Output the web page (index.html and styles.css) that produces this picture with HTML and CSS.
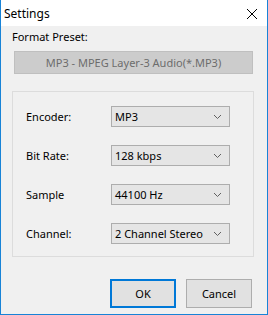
FILE: index.html
```html
<!DOCTYPE html>
<html>
<head>
<meta charset="utf-8">
<link rel="stylesheet" href="styles.css">
</head>
<body>
<div class="window">
  <div class="titlebar">
    <span class="title">Settings</span>
    <span class="close">
      <svg width="12" height="12" viewBox="0 0 12 12"><path d="M1 1L11 11M11 1L1 11" stroke="#000" stroke-width="1" fill="none"/></svg>
    </span>
  </div>
  <div class="content">
    <div class="preset-label">Format Preset:</div>
    <div class="preset">MP3 - MPEG Layer-3 Audio(*.MP3)</div>
    <div class="group">
      <div class="row"><span class="label">Encoder:</span><div class="combo"><span>MP3</span><svg class="chev" width="9" height="6" viewBox="0 0 9 6"><path d="M1 1L4.5 4.5L8 1" stroke="#606060" stroke-width="1" fill="none"/></svg></div></div>
      <div class="row"><span class="label">Bit Rate:</span><div class="combo"><span>128 kbps</span><svg class="chev" width="9" height="6" viewBox="0 0 9 6"><path d="M1 1L4.5 4.5L8 1" stroke="#606060" stroke-width="1" fill="none"/></svg></div></div>
      <div class="row"><span class="label">Sample</span><div class="combo"><span>44100 Hz</span><svg class="chev" width="9" height="6" viewBox="0 0 9 6"><path d="M1 1L4.5 4.5L8 1" stroke="#606060" stroke-width="1" fill="none"/></svg></div></div>
      <div class="row"><span class="label">Channel:</span><div class="combo"><span>2 Channel Stereo</span><svg class="chev" width="9" height="6" viewBox="0 0 9 6"><path d="M1 1L4.5 4.5L8 1" stroke="#606060" stroke-width="1" fill="none"/></svg></div></div>
    </div>
    <div class="buttons">
      <div class="btn btn-default">OK</div>
      <div class="btn">Cancel</div>
    </div>
  </div>
</div>
</body>
</html>
```
FILE: styles.css
```css
html, body {
  margin: 0;
  padding: 0;
  background: #f0f0f0;
}
body {
  font-family: "Noto Sans", "Open Sans", sans-serif;
  font-size: 11px;
  color: #000;
}
.window {
  width: 268px;
  height: 315px;
  box-sizing: border-box;
  border: 1px solid #1883d7;
  border-top: none;
  background: #f0f0f0;
  display: flex;
  flex-direction: column;
}
.titlebar {
  height: 26px;
  background: #fff;
  display: flex;
  align-items: center;
  justify-content: space-between;
  padding-left: 3px;
  padding-right: 9px;
  flex: none;
}
.title {
  font-size: 12px;
  line-height: 15px;
  margin-top: 1px;
}
.close {
  display: flex;
  margin-top: 1px;
}
.content {
  padding: 0 13px 0 11px;
  display: flex;
  flex-direction: column;
}
.preset-label {
  margin-top: 3px;
  line-height: 15px;
  height: 15px;
}
.preset {
  margin: 7px 1px 0 2px;
  height: 23px;
  box-sizing: border-box;
  border: 1px solid #bfbfbf;
  background: #cccccc;
  color: #6d6d6d;
  display: flex;
  align-items: center;
  justify-content: center;
  line-height: 15px;
}
.group {
  margin-top: 17px;
  height: 166px;
  box-sizing: border-box;
  border: 1px solid #dcdcdc;
  padding: 14px 0 0 13px;
  display: flex;
  flex-direction: column;
  gap: 18px;
}
.row {
  display: flex;
  align-items: center;
  height: 21px;
}
.label {
  width: 85px;
  line-height: 15px;
}
.combo {
  width: 119px;
  height: 21px;
  box-sizing: border-box;
  border: 1px solid #adadad;
  background: #e5e5e5;
  display: flex;
  align-items: center;
  justify-content: space-between;
  padding: 0 7px 0 3px;
  line-height: 15px;
  white-space: nowrap;
}
.chev {
  display: block;
  flex: none;
}
.buttons {
  margin-top: 22px;
  display: flex;
  justify-content: flex-end;
  gap: 10px;
  padding-right: 2px;
}
.btn {
  width: 66px;
  height: 29px;
  box-sizing: border-box;
  border: 1px solid #adadad;
  background: #e1e1e1;
  display: flex;
  align-items: center;
  justify-content: center;
  line-height: 15px;
}
.btn-default {
  border: 2px solid #0078d7;
}
```
